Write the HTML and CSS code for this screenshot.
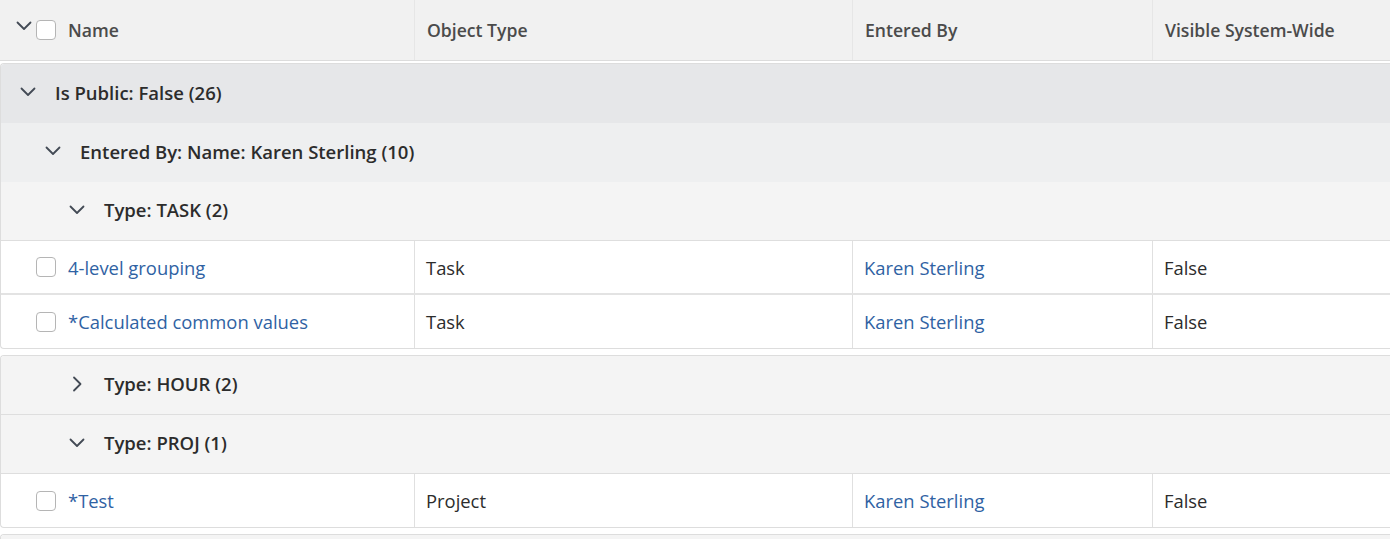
FILE: index.html
```html
<!DOCTYPE html>
<html lang="en">
<head>
<meta charset="utf-8">
<title>Grouped list</title>
<link rel="stylesheet" href="styles.css">
</head>
<body>
<div class="grid">
  <div class="header">
    <div class="hcell hname">
      <svg class="chev chev-head" viewBox="0 0 16 16" width="16" height="16"><path d="M1.5 4.5 L8 11 L14.5 4.5"/></svg>
      <span class="cb"></span>
      <span class="htext">Name</span>
    </div>
    <div class="hcell"><span class="htext">Object Type</span></div>
    <div class="hcell"><span class="htext">Entered By</span></div>
    <div class="hcell"><span class="htext">Visible System-Wide</span></div>
  </div>

  <div class="section">
    <div class="group g1">
      <svg class="chev" viewBox="0 0 16 16" width="16" height="16"><path d="M1.5 4.5 L8 11 L14.5 4.5"/></svg>
      <span class="gtext">Is Public: False (26)</span>
    </div>
    <div class="group g2">
      <svg class="chev" viewBox="0 0 16 16" width="16" height="16"><path d="M1.5 4.5 L8 11 L14.5 4.5"/></svg>
      <span class="gtext">Entered By: Name: Karen Sterling (10)</span>
    </div>
    <div class="group g3">
      <svg class="chev" viewBox="0 0 16 16" width="16" height="16"><path d="M1.5 4.5 L8 11 L14.5 4.5"/></svg>
      <span class="gtext">Type: TASK (2)</span>
    </div>
    <div class="row">
      <div class="cell cname"><span class="cb"></span><a class="link">4-level grouping</a></div>
      <div class="cell">Task</div>
      <div class="cell"><a class="link">Karen Sterling</a></div>
      <div class="cell">False</div>
    </div>
    <div class="row">
      <div class="cell cname"><span class="cb"></span><a class="link">*Calculated common values</a></div>
      <div class="cell">Task</div>
      <div class="cell"><a class="link">Karen Sterling</a></div>
      <div class="cell">False</div>
    </div>
  </div>

  <div class="section">
    <div class="group g3">
      <svg class="chev" viewBox="0 0 16 16" width="16" height="16"><path d="M5 1.5 L11.5 8 L5 14.5"/></svg>
      <span class="gtext">Type: HOUR (2)</span>
    </div>
    <div class="group g3">
      <svg class="chev" viewBox="0 0 16 16" width="16" height="16"><path d="M1.5 4.5 L8 11 L14.5 4.5"/></svg>
      <span class="gtext">Type: PROJ (1)</span>
    </div>
    <div class="row">
      <div class="cell cname"><span class="cb"></span><a class="link">*Test</a></div>
      <div class="cell">Project</div>
      <div class="cell"><a class="link">Karen Sterling</a></div>
      <div class="cell">False</div>
    </div>
  </div>

  <div class="section">
    <div class="group g3"></div>
  </div>
</div>
</body>
</html>
```

FILE: styles.css
```css
html, body {
  margin: 0;
  padding: 0;
  background: #ffffff;
  overflow: hidden;
}

body {
  font-family: "Open Sans", "Noto Sans", sans-serif;
  color: #2c2c2c;
}

.grid {
  width: 1390px;
}

.header {
  display: grid;
  grid-template-columns: 414px 438px 300px 1fr;
  height: 60px;
  background: #f1f1f1;
  border-bottom: 1px solid #dcdcdc;
  margin-bottom: 2px;
}

.hcell {
  display: flex;
  align-items: center;
  padding-left: 12px;
  border-left: 1px solid #e6e6e6;
}

.hcell.hname {
  border-left: 0;
  padding-left: 16px;
}

.htext {
  font-size: 17.6px;
  font-weight: 600;
  color: #4b4b4b;
}

.chev {
  flex: none;
  fill: none;
  stroke: #434a55;
  stroke-width: 1.8;
  stroke-linecap: round;
  stroke-linejoin: round;
}

.chev-head {
  margin-bottom: 9px;
  margin-right: 4px;
}

.cb {
  flex: none;
  box-sizing: border-box;
  width: 20px;
  height: 20px;
  border: 1.5px solid #b5b5b5;
  border-radius: 4px;
  background: #ffffff;
  margin-right: 12px;
}

.section {
  border: 1px solid #dddddd;
  border-right: 0;
  border-radius: 4px 0 0 4px;
  margin-bottom: 6px;
  overflow: hidden;
}

.group {
  display: flex;
  align-items: center;
  box-sizing: border-box;
  height: 59px;
  padding-bottom: 3px;
}

.group .chev {
  margin-right: 19px;
}

.gtext {
  font-size: 18.5px;
  font-weight: 600;
  color: #2c2c2c;
}

.g1 {
  background: #e6e7e9;
  padding-left: 19px;
}

.g2 {
  background: #eeeff0;
  padding-left: 44px;
}

.g3 {
  background: #f4f4f4;
  padding-left: 68px;
  border-bottom: 1px solid #dedede;
}

.row {
  display: grid;
  grid-template-columns: 413px 438px 300px 1fr;
  height: 52px;
  border-bottom: 2px solid #e3e3e3;
}

.row:last-child {
  border-bottom: 0;
  height: 53px;
}

.cell {
  display: flex;
  align-items: center;
  padding-left: 11px;
  border-left: 1px solid #e0e0e0;
  font-size: 18.4px;
  color: #2c2c2c;
}

.cell.cname {
  border-left: 0;
  padding-left: 35px;
}

.link {
  color: #2f62a3;
  text-decoration: none;
}
```
